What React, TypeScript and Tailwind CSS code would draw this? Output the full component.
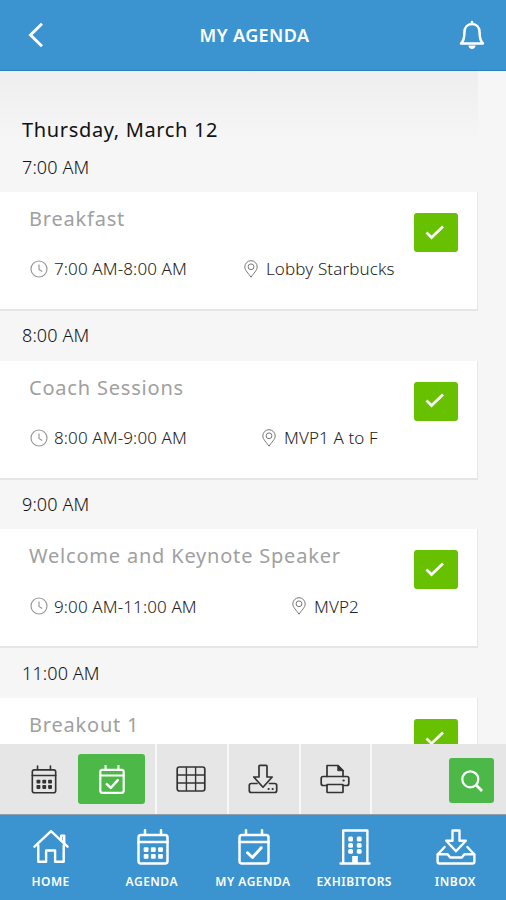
import React from "react";

type Session = {
  slot: string;
  title: string;
  time?: string;
  timeClass?: string;
  place?: string;
};

const sessions: Session[] = [
  { slot: "7:00 AM", title: "Breakfast", time: "7:00 AM-8:00 AM", timeClass: "w-[190px]", place: "Lobby Starbucks" },
  { slot: "8:00 AM", title: "Coach Sessions", time: "8:00 AM-9:00 AM", timeClass: "w-[208px]", place: "MVP1 A to F" },
  { slot: "9:00 AM", title: "Welcome and Keynote Speaker", time: "9:00 AM-11:00 AM", timeClass: "w-[238px]", place: "MVP2" },
  { slot: "11:00 AM", title: "Breakout 1" },
];

function Calendar({ check, className, stroke = 2.5 }: { check?: boolean; className: string; stroke?: number }) {
  return (
    <svg viewBox="0 0 32 36" className={className} fill="none" stroke="currentColor" strokeWidth={stroke} strokeLinecap="round" strokeLinejoin="round">
      <rect x="1.5" y="6" width="29" height="28.5" rx="2.5" />
      <path d="M1.5 13h29" />
      <path d="M8 1.3v4.5M24 1.3v4.5" />
      {check ? (
        <path d="M9.5 23.8l5 4.7 8.7-9.8" strokeWidth={stroke + 0.4} />
      ) : (
        <g fill="currentColor" stroke="none">
          {[9, 16.2, 23.4].map((x) =>
            [20.5, 27.2].map((y) => <rect key={`${x}-${y}`} x={x - 2.3} y={y - 2.3} width="4.8" height="4.8" rx="1" />)
          )}
        </g>
      )}
    </svg>
  );
}

function Home() {
  return (
    <svg viewBox="0 0 36 34" className="mr-[2px] mb-[2px] h-[34px] w-9" fill="none" stroke="currentColor" strokeWidth="2.4" strokeLinecap="round" strokeLinejoin="round">
      <path d="M1.500 17.700L18 2.200l16.500 15.500" />
      <path d="M28.200 11.500V6.600h3v7.700" />
      <path d="M5.300 16.500v16.300h7.800V21.500h9v11.300h8.600V16.500" />
    </svg>
  );
}

function Building() {
  return (
    <svg viewBox="0 0 32 36" className="h-9 w-8" fill="none" stroke="currentColor" strokeWidth="2.4" strokeLinejoin="round" strokeLinecap="round">
      <path d="M4.200 34.200V1.500h24.200v32.700M1.500 34.500h29" />
      <g fill="currentColor" stroke="none">
        {[9.2, 17.8].map((x) => [7.6, 13.9, 20].map((y) => <rect key={`${x}-${y}`} x={x} y={y} width="4.8" height="4.8" rx="1.5" />))}
        <rect x="13.200" y="27" width="5.600" height="8" />
      </g>
    </svg>
  );
}

function Inbox() {
  return (
    <svg viewBox="0 0 40 36" className="h-9 w-10" fill="none" stroke="currentColor" strokeWidth="2.4" strokeLinejoin="round" strokeLinecap="round">
      <path d="M16.500 1.500h7v10.200h6.300L20 22.300l-9.800-10.600h6.300z" />
      <path d="M8.600 18L1.600 25.500v7q0 2 2 2h32.800q2 0 2-2v-7L31.400 18" />
      <path d="M1.800 25.300h9.800l2.600 3.200h11.600l2.600-3.200h9.800" />
    </svg>
  );
}

function Grid() {
  return (
    <svg viewBox="0 0 30 26" className="h-[26px] w-[30px]" fill="none" stroke="currentColor" strokeWidth="1.7">
      <rect x="1.200" y="1" width="27.600" height="24" rx="2.200" />
      <path d="M1 9h28M1 17h28M10.400 1v24M19.600 1v24" strokeWidth="1.4" />
    </svg>
  );
}

function Download() {
  return (
    <svg viewBox="0 0 30 30" className="size-[30px]" fill="none" stroke="currentColor" strokeWidth="1.7" strokeLinejoin="round" strokeLinecap="round">
      <path d="M11 2.200q0-.9.900-.9h6.200q.9 0 .9.900V13h5.200L15 23.200 5.800 13H11z" />
      <path d="M9 19.500H3.300q-2 0-2 2v5q0 2 2 2h23.400q2 0 2-2v-5q0-2-2-2H21.500" />
      <path d="M20.500 25h.3M24.500 25h.3" strokeWidth="1.900" />
    </svg>
  );
}

function Printer() {
  return (
    <svg viewBox="0 0 30 30" className="size-[30px]" fill="none" stroke="currentColor" strokeWidth="1.7" strokeLinejoin="round" strokeLinecap="round">
      <path d="M7 12.500V1.500h11l5 5.200v5.800" />
      <path d="M17.800 1.500v5.200H23z" fill="currentColor" strokeWidth="1" />
      <path d="M7 21.500H3.200q-2 0-2-2v-5q0-2 2-2h23.600q2 0 2 2v5q0 2-2 2H23" />
      <rect x="7" y="20.500" width="16" height="8" rx=".5" />
      <path d="M23.500 16.500h.2" strokeWidth="2.200" />
    </svg>
  );
}

function Clock() {
  return (
    <svg viewBox="0 0 18 18" className="size-[18px] shrink-0 text-[#999]" fill="none" stroke="currentColor" strokeWidth="1.2">
      <circle cx="9" cy="9" r="8" />
      <path d="M9 4.500v5l3.200 2" />
    </svg>
  );
}

function Pin() {
  return (
    <svg viewBox="0 0 14 18" className="h-[18px] w-[14px] text-[#777]" fill="none" stroke="currentColor" strokeWidth="1">
      <path d="M7 17.200C4.500 13.500.800 10.200.800 6.900a6.200 6.200 0 0 1 12.400 0C13.200 10.200 9.500 13.500 7 17.200z" />
      <circle cx="7" cy="6.800" r="2.900" />
    </svg>
  );
}

function SessionCard({ s }: { s: Session }) {
  return (
    <section className="h-[168.700px] shrink-0">
      <div className="flex h-[50px] items-center pl-[22px] text-[18px] font-light tracking-[0.100px] text-[#111]">{s.slot}</div>
      <div className="flex h-[119px] w-[478px] justify-between border-r border-b-2 border-[#e6e6e6] bg-white">
        <div className="pl-[29px]">
          <h3 className="mt-[12px] h-[30px] text-[20px] leading-[30px] tracking-[0.800px] whitespace-nowrap text-[#a0a0a0]">{s.title}</h3>
          {s.time && (
            <div className="mt-[23px] flex h-6 items-center pl-[1px] text-[17px] font-light tracking-[0.120px] whitespace-nowrap text-[#222]">
              <Clock />
              <span className={`pl-[6px] ${s.timeClass}`}>{s.time}</span>
              <span className="ml-[6px]"><Pin /></span>
              <span className="pl-[8px]">{s.place}</span>
            </div>
          )}
        </div>
        <button className="mt-[21px] mr-[19px] flex h-[39px] w-[44px] shrink-0 items-center justify-center rounded-[3px] bg-[#67c000] text-white">
          <svg viewBox="0 0 20 16" className="mr-[2px] h-4 w-5" fill="none" stroke="currentColor" strokeWidth="2.700">
            <path d="M1.500 7.500l5 5L18 1.500" />
          </svg>
        </button>
      </div>
    </section>
  );
}

const tabs = [
  { label: "HOME", icon: <Home /> },
  { label: "AGENDA", icon: <Calendar className="h-9 w-8" /> },
  { label: "MY AGENDA", icon: <Calendar check className="h-9 w-8" /> },
  { label: "EXHIBITORS", icon: <Building /> },
  { label: "INBOX", icon: <Inbox /> },
];

export default function App() {
  return (
    <div className="flex h-[900px] w-[506px] flex-col overflow-hidden bg-[#f6f6f6] font-['Noto_Sans','Open_Sans',sans-serif]">
      <header className="flex h-[71px] shrink-0 items-center justify-between border-b border-[#2381c2] bg-[#3b94d0] pr-[21px] pl-[28px] text-white">
        <svg viewBox="0 0 16 26" className="h-[26px] w-4" fill="none" stroke="currentColor" strokeWidth="2.900">
          <path d="M14 1.800L2.500 13l11.500 11.200" />
        </svg>
        <h1 className="pt-px pl-[6px] text-[18px] font-semibold tracking-[0.400px]">MY AGENDA</h1>
        <svg viewBox="0 0 26 30" className="h-[30px] w-[26px]" fill="none" stroke="currentColor" strokeWidth="2.500" strokeLinejoin="round">
          <path d="M2 23.500c2.800-2.600 3.400-5 3.400-11 0-5.200 3.200-8.400 7.600-8.400s7.600 3.200 7.600 8.400c0 6 .6 8.400 3.400 11z" />
          <path d="M13 3.500V2" strokeLinecap="round" />
          <path d="M9.500 25.500h7c0 4.500-7 4.500-7 0z" fill="currentColor" stroke="none" />
        </svg>
      </header>

      <main className="flex h-[673px] shrink-0 flex-col overflow-hidden">
        <div className="h-[71px] w-[478px] shrink-0 bg-linear-to-b from-[#eeeeee] to-[#f6f6f6] pt-[44px] pl-[22px]">
          <h2 className="text-[20px] leading-[30px] tracking-[0.650px] whitespace-nowrap text-[#111]">Thursday, March 12</h2>
        </div>
        {sessions.map((s) => (
          <SessionCard key={s.slot} s={s} />
        ))}
      </main>

      <div className="flex h-[71px] shrink-0 border-b border-[#8fa0a8] bg-[#e6e6e6] text-[#333]">
        <div className="flex w-[157px] items-center border-r-2 border-[#f8f8f8] pl-[31px]">
          <Calendar className="h-[29px] w-[26px]" stroke={2} />
          <div className="ml-[21px] flex h-[50px] w-[67px] items-center justify-center rounded-[3px] bg-[#4cb848] text-white">
            <Calendar check className="h-[29px] w-[26px]" stroke={2.7} />
          </div>
        </div>
        <div className="flex w-[72px] items-center justify-center border-r-2 border-[#f8f8f8] pr-[3px]"><Grid /></div>
        <div className="flex w-[72px] items-center justify-center border-r-2 border-[#f8f8f8] pr-[2px]"><Download /></div>
        <div className="flex w-[71px] items-center justify-center border-r-2 border-[#f8f8f8] pr-[1px]"><Printer /></div>
        <div className="flex flex-1 items-center justify-end pt-[3px] pr-[12px]">
          <div className="flex size-[45px] items-center justify-center rounded-[3px] bg-[#4cb848] text-white">
            <svg viewBox="0 0 22 22" className="size-[22px]" fill="none" stroke="currentColor" strokeWidth="2.200">
              <circle cx="9.300" cy="9.300" r="8" />
              <path d="M14.800 14.800L21 21" strokeWidth="2.800" />
            </svg>
          </div>
        </div>
      </div>

      <nav className="grid h-[85px] shrink-0 grid-cols-5 bg-[#3b94d0] text-white">
        {tabs.map((t) => (
          <div key={t.label} className="flex flex-col items-center pt-[14px]">
            <div className="flex h-9 items-center pl-[2px]">{t.icon}</div>
            <span className="mt-[8px] text-[12px] leading-[18px] font-semibold tracking-[0.500px] whitespace-nowrap">{t.label}</span>
          </div>
        ))}
      </nav>
    </div>
  );
}
